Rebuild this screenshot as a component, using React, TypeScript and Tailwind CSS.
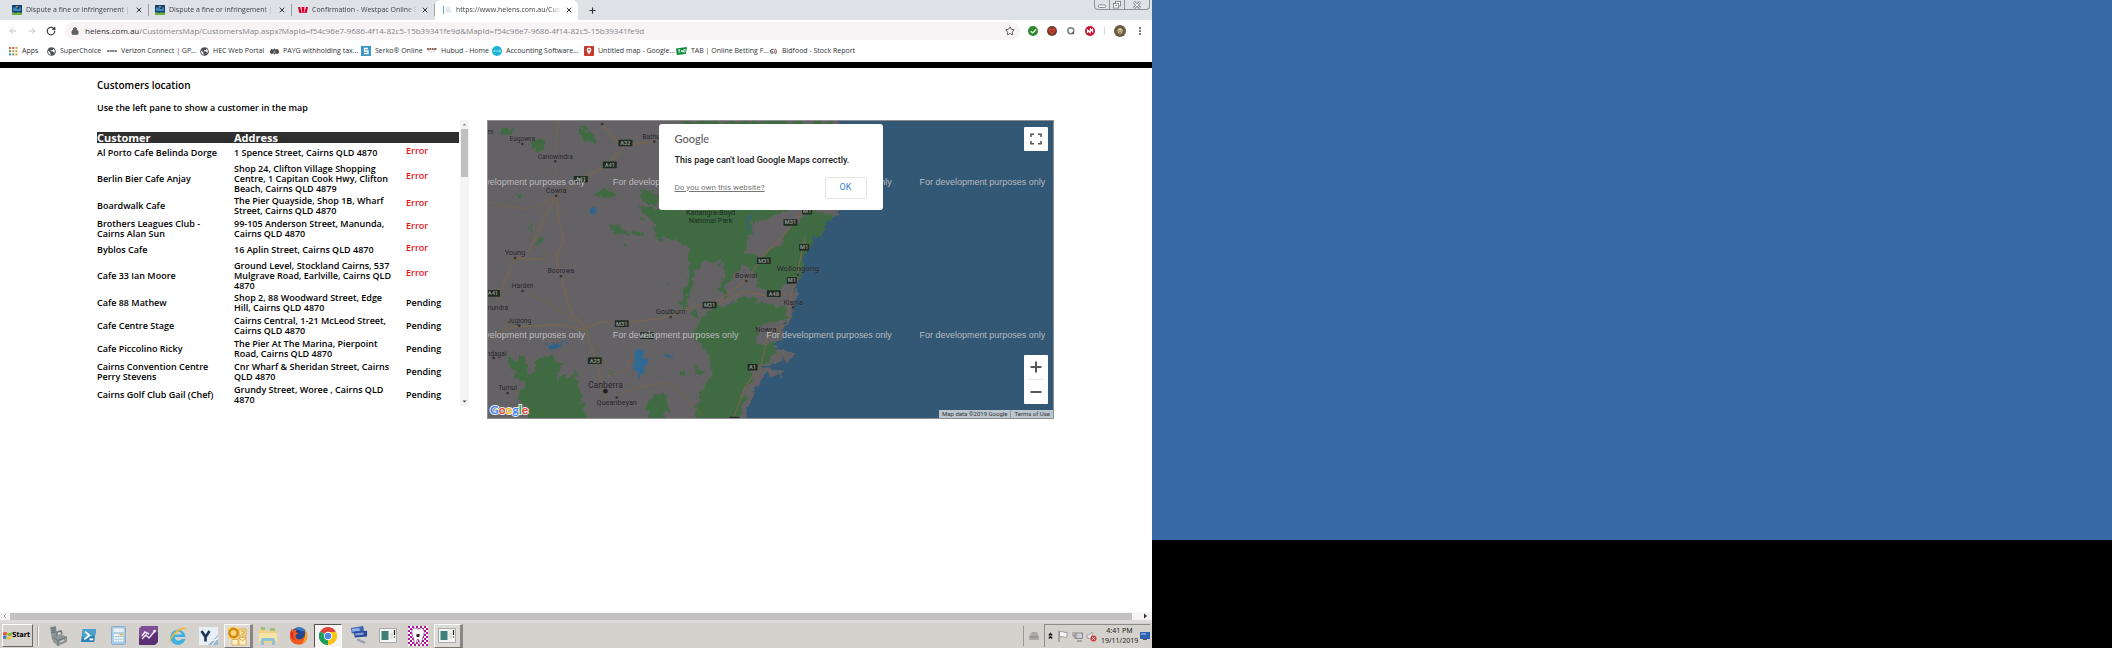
import type { ReactNode } from "react";
import {
  ArrowLeft,
  ArrowRight,
  RotateCw,
  Lock,
  Star,
  X,
  Plus,
  EllipsisVertical,
  Check,
} from "lucide-react";

const UI = "font-['Open_Sans','Noto_Sans',sans-serif]";

/* ---------- Favicons ---------- */

function CouncilIcon() {
  return (
    <svg viewBox="0 0 10 10" className="size-[10px]">
      <rect width="10" height="10" fill="#123f73" />
      <path d="M1 2l2 1 1-2 1 3h2l1-3 1 2v3H1z" fill="#3f83b8" />
      <path d="M0 7.5c2-1 3 1 5 0s3 1 5 0V10H0z" fill="#6fae3c" />
      <path d="M4 1l1 2 1-2z" fill="#f2c230" />
    </svg>
  );
}

function WestpacIcon() {
  return (
    <svg viewBox="0 0 10 10" className="size-[10px]">
      <path d="M0 2h2.200l1.400 6H2.200Q1.200 8 1 7zM3.400 2h3.200v6H3.400zM7.800 2H10L9 7q-.2 1-1.200 1H6.400z" fill="#d5002b" />
      <path d="M3 2l1 6M7 2L6 8" stroke="#fff" strokeWidth=".5" />
    </svg>
  );
}

function PageIcon() {
  return (
    <svg viewBox="0 0 10 10" className="size-[10px]">
      <path d="M1 1h1v8H1z" fill="#6ea0d8" />
      <path d="M4 3h4M4 5h5M4 7h5" stroke="#c4d2e2" strokeWidth="1" />
    </svg>
  );
}

function AppsIcon() {
  const fills = ["#d9604c", "#d9604c", "#e0a040", "#5c9a58", "#c98a3c", "#c9a03c", "#4a7cc0", "#5c9a58", "#c9a03c"];
  return (
    <svg viewBox="0 0 9 9" className="size-[9px]">
      {fills.map((f, i) => (
        <rect key={i} x={(i % 3) * 3.2} y={Math.floor(i / 3) * 3.2} width="2" height="2" fill={f} />
      ))}
    </svg>
  );
}

function GlobeIcon() {
  return (
    <svg viewBox="0 0 10 10" className="size-[9px]">
      <circle cx="5" cy="5" r="4.800" fill="#4d5156" />
      <path d="M1.300 4l2.400 2.200v1.600l1 1C2 8.600.8 6.500 1.300 4zM5 1.200l2.500.8-.8 1.200-2 .4L3.900 4.800h2.400L8 6.300 7.200 8c2-1.800 2-4.500.3-6z" fill="#fff" />
    </svg>
  );
}

function DashIcon() {
  return (
    <svg viewBox="0 0 10 10" className="size-[10px]">
      <path d="M0 5h10" stroke="#555" strokeWidth="1.600" strokeDasharray="2.200 .4" />
    </svg>
  );
}

function CrestIcon() {
  return (
    <svg viewBox="0 0 10 10" className="size-[9px]">
      <path d="M0 6c0-3 2-5 3.500-3L5 1.500 6.500 3C8 1 10 3 10 6L8 8 6.500 7 5 8.500 3.500 7 2 8z" fill="#4a4a4a" />
      <path d="M4 4h2v3H4z" fill="#999" />
    </svg>
  );
}

function SerkoIcon() {
  return (
    <svg viewBox="0 0 10 10" className="size-[10px]">
      <rect width="10" height="10" fill="#3b97c9" />
      <path d="M7 2.500H3.500V5H7v2.500H3" fill="none" stroke="#fff" strokeWidth="1.300" />
    </svg>
  );
}

function HubudIcon() {
  return (
    <svg viewBox="0 0 10 10" className="size-[10px]">
      <path d="M0 3h10" stroke="#8a5a50" strokeWidth="1.800" strokeDasharray="1.800 .6" />
      <path d="M1 5h2M4 6h1M6 5h2" stroke="#b5a09a" strokeWidth=".8" />
    </svg>
  );
}

function XeroIcon() {
  return (
    <svg viewBox="0 0 10 10" className="size-[10px]">
      <circle cx="5" cy="5" r="5" fill="#1ab4d7" />
      <path d="M1.800 4l1.500 2m0-2L1.800 6M4 5h1.500M6 6V4.500M7 4.200h1.300v1.500H7z" fill="none" stroke="#dff4fa" strokeWidth=".6" />
    </svg>
  );
}

function MyMapsIcon() {
  return (
    <svg viewBox="0 0 10 10" className="size-[10px]">
      <rect width="10" height="10" rx="1" fill="#c5392c" />
      <path d="M5 1.500a2.300 2.300 0 0 1 2.300 2.300C7.300 5.600 5 8.500 5 8.500S2.700 5.600 2.700 3.800A2.300 2.300 0 0 1 5 1.500z" fill="#fff" />
      <circle cx="5" cy="3.800" r=".9" fill="#c5392c" />
    </svg>
  );
}

function TabIcon() {
  return (
    <svg viewBox="0 0 11 10" className="h-[10px] w-[11px]">
      <path d="M0 2.500L11 1 9.800 8 .8 9z" fill="#0c8a3e" />
      <path d="M2 4l2.200-.3M3.200 4v2.800M5 6.500l1-2.500.8 2.300M7.800 3.500l1.500 0-.4 2.600H7.600z" stroke="#fff" strokeWidth=".8" fill="none" />
    </svg>
  );
}

function BidfoodIcon() {
  return (
    <svg viewBox="0 0 10 10" className="size-[9px]">
      <path d="M5 2.500C2 2.500 1 4 1.500 5.500S4 8 4.500 6.500 3 5 2.500 5.500M7 2c2 2 1 5 0 6" fill="none" stroke="#444" strokeWidth="1.100" />
      <path d="M6 3v4" stroke="#b03030" strokeWidth=".8" />
    </svg>
  );
}

/* ---------- Browser chrome ---------- */

function Tab({ icon, title, active = false }: { icon: ReactNode; title: string; active?: boolean }) {
  return (
    <div
      className={
        active
          ? "flex h-5 w-[143px] items-center gap-1 rounded-t-md bg-white pl-[7px] pr-[5px] [&>svg]:shrink-0"
          : "flex h-5 w-[143px] items-center gap-1 pl-[6px] pr-0 [&>svg]:shrink-0"
      }
    >
      {icon}
      <span className="min-w-0 flex-1 overflow-hidden whitespace-nowrap mask-r-from-90% text-[7px] text-[#3f4347]">
        {title}
      </span>
      <button type="button" aria-label="Close tab" className="text-[#303338]">
        <X className="size-[8px]" strokeWidth={3} />
      </button>
      {!active && <span className="ml-px h-3 w-px bg-[#9aa0a6]" />}
    </div>
  );
}

function WindowControls() {
  return (
    <div className="mr-[2px] flex h-[10px] w-14 self-start rounded-b-sm border border-t-0 border-[#8f9499] text-[#70757b]">
      <button type="button" aria-label="Minimise" className="flex flex-1 items-center justify-center border-r border-[#8f9499]">
        <svg viewBox="0 0 8 8" className="size-2"><rect x=".5" y="4" width="7" height="2.500" rx="1" fill="#fff" stroke="currentColor" strokeWidth=".8" /></svg>
      </button>
      <button type="button" aria-label="Restore" className="flex flex-1 items-center justify-center border-r border-[#8f9499]">
        <svg viewBox="0 0 8 8" className="size-2" fill="#fff" stroke="currentColor" strokeWidth=".8"><rect x="2.500" y=".5" width="5" height="4.500" /><rect x=".5" y="2.500" width="5" height="4.500" /><path d="M2 4.500h2" /></svg>
      </button>
      <button type="button" aria-label="Close" className="flex w-6 items-center justify-center">
        <svg viewBox="0 0 8 8" className="size-2" stroke="currentColor"><path d="M1 1l6 6M7 1L1 7" strokeWidth="2.600" /><path d="M1.300 1.300l5.400 5.400M6.700 1.300L1.300 6.700" stroke="#fff" strokeWidth="1.200" /></svg>
      </button>
    </div>
  );
}

function TabStrip() {
  return (
    <div className="flex h-5 items-end bg-[#dee1e6] pl-[6px]">
      <Tab icon={<CouncilIcon />} title="Dispute a fine or infringement | Bris" />
      <Tab icon={<CouncilIcon />} title="Dispute a fine or infringement | Bris" />
      <Tab icon={<WestpacIcon />} title="Confirmation - Westpac Online Ban" />
      <Tab icon={<PageIcon />} title="https://www.helens.com.au/Custo" active />
      <button type="button" aria-label="New tab" className="flex h-5 w-7 items-center justify-center text-[#303338]">
        <Plus className="size-[9px]" strokeWidth={3} />
      </button>
      <div className="flex-1" />
      <WindowControls />
    </div>
  );
}

function Toolbar() {
  return (
    <div className="flex h-[22px] items-center bg-white pr-[7px]">
      <div className="flex w-[65px] items-center gap-[9px] pl-2">
        <button type="button" aria-label="Back" className="text-[#b6b8bb]"><ArrowLeft className="size-[10px]" strokeWidth={2} /></button>
        <button type="button" aria-label="Forward" className="text-[#b6b8bb]"><ArrowRight className="size-[10px]" strokeWidth={2} /></button>
        <button type="button" aria-label="Reload" className="text-[#3c4043]"><RotateCw className="size-[10px]" strokeWidth={3} /></button>
      </div>
      <div className="flex h-[18px] flex-1 items-center rounded-full bg-[#f8f3f5] pl-[6px] pr-[5px]">
        <Lock className="size-[8px] fill-[#5f6368] text-[#5f6368]" strokeWidth={3} />
        <a href="#address" className="ml-[6px] flex-1 whitespace-nowrap text-[8px] leading-[18px] text-[#85878c]">
          <span className="text-[#2b2d30]">helens.com.au</span>
          /CustomersMap/CustomersMap.aspx?MapId=f54c96e7-9686-4f14-82c5-15b39341fe9d&amp;MapId=f54c96e7-9686-4f14-82c5-15b39341fe9d
        </a>
        <button type="button" aria-label="Bookmark this page" className="text-[#3c4043]"><Star className="size-[10px]" strokeWidth={2} /></button>
      </div>
      <div className="ml-2 flex items-center gap-[9px]">
        <button type="button" aria-label="Safe site" className="flex size-[10px] items-center justify-center rounded-full bg-[#2d8a2f] text-white"><Check className="size-[7px]" strokeWidth={4} /></button>
        <button type="button" aria-label="Brave extension" className="size-[10px]">
          <svg viewBox="0 0 10 10"><circle cx="5" cy="5" r="5" fill="#6b3a30" /><path d="M2 2.500h6L8.300 5 5 8.800 1.700 5z" fill="#d3452c" /><path d="M3.500 4.500l1.500 1 1.500-1" stroke="#6d2015" fill="none" /></svg>
        </button>
        <button type="button" aria-label="Search extension" className="size-[10px]">
          <svg viewBox="0 0 10 10"><circle cx="4.800" cy="4.800" r="3" fill="#fff" stroke="#77787a" strokeWidth="1.400" /><path d="M6.500 7.500l1.500-.8" stroke="#444" strokeWidth="1.500" /></svg>
        </button>
        <button type="button" aria-label="Norton extension" className="size-[10px]">
          <svg viewBox="0 0 10 10"><circle cx="5" cy="5" r="5" fill="#c8102e" /><path d="M2.500 7V4l2.500 2.500L5.500 3 7.500 5.500V2.500" fill="none" stroke="#fff" strokeWidth="1.300" /></svg>
        </button>
        <span className="h-2 w-px bg-[#d5d7da]" />
        <button type="button" aria-label="Profile" className="size-3">
          <svg viewBox="0 0 12 12"><circle cx="6" cy="6" r="6" fill="#6d5b43" /><path d="M3.500 5.500a2.600 3 0 0 1 5.200 0c0 2-1 3.500-2.600 3.500S3.500 7.500 3.500 5.500z" fill="#d8bf95" /><path d="M3.500 4.200C4 2 8 2 8.700 4.200M4.500 6h1M6.800 6h1M5 7.800h2" stroke="#4a3c2c" fill="none" strokeWidth=".8" /></svg>
        </button>
        <button type="button" aria-label="Menu" className="text-[#4b4f54]"><EllipsisVertical className="size-[10px]" strokeWidth={3} /></button>
      </div>
    </div>
  );
}

const bookmarks = [
  { icon: <AppsIcon />, label: "Apps", width: "w-[38px]" },
  { icon: <GlobeIcon />, label: "SuperChoice", width: "w-[60px]" },
  { icon: <DashIcon />, label: "Verizon Connect | GP…", width: "w-[93px]" },
  { icon: <GlobeIcon />, label: "HEC Web Portal", width: "w-[70px]" },
  { icon: <CrestIcon />, label: "PAYG withholding tax…", width: "w-[91px]" },
  { icon: <SerkoIcon />, label: "Serko® Online", width: "w-[66px]" },
  { icon: <HubudIcon />, label: "Hubud - Home", width: "w-[65px]" },
  { icon: <XeroIcon />, label: "Accounting Software…", width: "w-[92px]" },
  { icon: <MyMapsIcon />, label: "Untitled map - Google…", width: "w-[92px]" },
  { icon: <TabIcon />, label: "TAB | Online Betting F…", width: "w-[93px]" },
  { icon: <BidfoodIcon />, label: "Bidfood - Stock Report", width: "w-[93px]" },
];

function BookmarksBar() {
  return (
    <nav aria-label="Bookmarks" className="flex h-5 items-center bg-white pb-[2px] pl-[9px]">
      {bookmarks.map((b) => (
        <a key={b.label} href="#bookmark" className={`flex items-center gap-1 whitespace-nowrap text-[7px] text-[#2f3236] [&>svg]:shrink-0 ${b.width}`}>
          {b.icon}
          <span>{b.label}</span>
        </a>
      ))}
    </nav>
  );
}

/* ---------- Customers list ---------- */

const customers = [
  { name: "Al Porto Cafe Belinda Dorge", address: "1 Spence Street, Cairns QLD 4870", status: "Error" },
  { name: "Berlin Bier Cafe Anjay", address: "Shop 24, Clifton Village Shopping\nCentre, 1 Capitan Cook Hwy, Clifton\nBeach, Cairns QLD 4879", status: "Error" },
  { name: "Boardwalk Cafe", address: "The Pier Quayside, Shop 1B, Wharf\nStreet, Cairns QLD 4870", status: "Error" },
  { name: "Brothers Leagues Club -\nCairns Alan Sun", address: "99-105 Anderson Street, Manunda,\nCairns QLD 4870", status: "Error" },
  { name: "Byblos Cafe", address: "16 Aplin Street, Cairns QLD 4870", status: "Error" },
  { name: "Cafe 33 Ian Moore", address: "Ground Level, Stockland Cairns, 537\nMulgrave Road, Earlville, Cairns QLD\n4870", status: "Error" },
  { name: "Cafe 88 Mathew", address: "Shop 2, 88 Woodward Street, Edge\nHill, Cairns QLD 4870", status: "Pending" },
  { name: "Cafe Centre Stage", address: "Cairns Central, 1-21 McLeod Street,\nCairns QLD 4870", status: "Pending" },
  { name: "Cafe Piccolino Ricky", address: "The Pier At The Marina, Pierpoint\nRoad, Cairns QLD 4870", status: "Pending" },
  { name: "Cairns Convention Centre\nPerry Stevens", address: "Cnr Wharf & Sheridan Street, Cairns\nQLD 4870", status: "Pending" },
  { name: "Cairns Golf Club Gail (Chef)", address: "Grundy Street, Woree , Cairns QLD\n4870", status: "Pending" },
];

function rowHeight(address: string) {
  const lines = address.split("\n").length;
  if (lines === 1) return "h-5";
  return lines === 2 ? "h-[23px]" : "h-[31px]";
}

function CustomerTable() {
  return (
    <div className="flex w-[372px] shrink-0 justify-between self-start">
      <div className="w-[362px] pt-3">
        <table className="w-full table-fixed border-collapse text-left text-[9px] leading-[10px] font-semibold text-black">
          <thead>
            <tr className="h-[11px] bg-[#2e2e2e] text-[11px] leading-[11px] text-white">
              <th className="w-[137px] p-0 font-bold">Customer</th>
              <th className="w-[172px] p-0 font-bold">Address</th>
              <th className="p-0" aria-label="Status" />
            </tr>
          </thead>
          <tbody>
            {customers.map((c) => (
              <tr key={c.name} className={rowHeight(c.address)}>
                <td className="whitespace-pre p-0 align-middle">{c.name}</td>
                <td className="whitespace-pre p-0 align-middle">{c.address}</td>
                <td className={c.status === "Error" ? "p-0 pb-[5px] align-middle text-[#e0131c]" : "p-0 align-middle"}>
                  {c.status}
                </td>
              </tr>
            ))}
          </tbody>
        </table>
      </div>
      <div className="flex w-[9px] flex-col items-center bg-[#f6f3f5]">
        <svg viewBox="0 0 9 9" className="size-[9px]"><path d="M2.500 5.500L4.500 3.500l2 2z" fill="#8a8a8a" /></svg>
        <div className="h-12 w-[7px] bg-[#c1bfc0]" />
        <div className="flex-1" />
        <svg viewBox="0 0 9 9" className="size-[9px]"><path d="M2.500 3.500l2 2 2-2z" fill="#444" /></svg>
      </div>
    </div>
  );
}

/* ---------- Map ---------- */

const towns: [string, number, number, number][] = [
  ["Eugowra", 126, 92, 20],
  ["Canowindra", 225, 144, 20],
  ["Bathurst", 525, 84, 20],
  ["Cowra", 228, 246, 22],
  ["Young", 104, 433, 22],
  ["Boorowa", 242, 489, 20],
  ["Harden", 127, 533, 20],
  ["Jugiong", 117, 638, 20],
  ["Goulburn", 572, 611, 22],
  ["Bowral", 799, 503, 22],
  ["Canberra", 376, 832, 26],
  ["Queanbeyan", 410, 886, 22],
  ["Tumut", 82, 838, 20],
  ["Wollongong", 954, 481, 24],
  ["Kiama", 940, 583, 20],
  ["Nowra", 858, 664, 22],
];

const dots: [number, number][] = [
  [126, 100], [225, 152], [228, 256], [104, 443], [242, 497], [127, 542], [117, 646],
  [572, 620], [799, 512], [410, 862], [82, 849], [954, 493], [940, 591], [366, 40], [523, 93], [40, 743],
];

const shields: [string, number, number][] = [
  ["A32", 436, 97], ["A41", 389, 163], ["A41", 302, 206], ["A41", 38, 549], ["M31", 852, 451],
  ["M31", 689, 584], ["M31", 425, 640], ["M23", 501, 676], ["A25", 344, 751], ["A48", 882, 550],
  ["A1", 818, 771], ["M31", 932, 336], ["M1", 973, 411], ["M1", 936, 510], ["M1", 982, 302], ["A1", 764, 930],
];

const watermarkX = [-63, 398, 859, 1320];
const watermarkY = [222, 683];

function MapCanvas() {
  return (
    <svg viewBox="23 31 1698 897" preserveAspectRatio="xMinYMin slice" className="absolute inset-0 size-full" fontFamily="Roboto, sans-serif">
      <defs>
        <filter id="rough" x="-5%" y="-5%" width="110%" height="110%">
          <feTurbulence type="fractalNoise" baseFrequency="0.035" numOctaves="3" seed="7" />
          <feDisplacementMap in="SourceGraphic" scale="40" xChannelSelector="R" yChannelSelector="G" />
        </filter>
      </defs>
      <rect x="0" y="0" width="1760" height="960" fill="#656266" />
      <g fill="#3f6a43" filter="url(#rough)">
        <path d="M520 290H960L830 330 800 400 790 430 840 440 900 400 940 340 1000 300 1060 310 1050 370 1000 400 975 450 960 500 920 530 880 545 835 530 825 480 790 470 760 490 730 560 715 540 735 490 720 450 680 450 650 470 640 520 625 560 610 590 600 580 620 530 630 480 625 420 600 395 560 385 530 340 470 290z" />
        <path d="M700 590L760 575 810 562 850 580 920 590 935 615 900 635 840 650 825 690 850 705 900 700 870 740 830 770 800 830 790 880 770 940H635L660 850 695 790 690 730 640 680 650 640z" />
        <path d="M80 740L130 745 150 790 190 730 240 760 230 820 280 780 300 850 320 900 315 940H150L140 890 110 870 130 830z" />
        <path d="M505 860l50-10 10 30-15 60h-45l-5-40z" />
        <path d="M155 85l40 10-5 25-30 5zM305 50l35 15 10 30-40 5zM60 50l30 8 5 12-30-5z" />
        <path d="M340 245l70-10 10 20-60 10zM110 245l20 5-5 22-15-5zM165 380l20 8-15 20zM150 345l12 8-10 6zM395 345l30 0 15 25-40-2zM432 392l18 12-5 8z" />
        <path d="M470 240l60 10 20 30-50 0zM455 360l40 5-5 15-35-8zM515 340l60 0 0 45-40 0zM640 600l20 8-4 14-18-6zM590 480l16 4-6 10zM470 320l20 4-4 10z" />
        <path d="M385 780l15 15 0 8-15-10zM600 780l20 5-5 20-15-4zM640 770l30 5 0 15-20 0zM560 510l8 6-6 6zM100 790l20 10-8 14zM200 850l16 2-4 12z" />
        <path d="M600 31h470v14H600z" />
      </g>
      <g filter="url(#rough)">
        <path d="M1075 20H1760V960H790L805 890 820 840 850 797 905 795 918 780 880 785 858 772 866 752 890 758 912 742 930 758 938 732 890 712 908 680 912 640 938 610 948 570 942 540 958 515 965 480 972 450 988 415 1002 385 1042 360 1032 345 1068 320 1080 295z" fill="#305875" />
        <path d="M468 715l14 12 16 22-10 45-14 10-12-40z" fill="#2d6a93" />
        <path d="M325 290l18 0 4 12-8 14zM555 735l22 2-10 9zM205 700l30 10 28-20 4 6-40 22-20 2zM800 350l10-40 8 0-14 60z" fill="#2f648c" />
        <path d="M848 765l28-6 2 14-20 2z" fill="#305875" />
      </g>
      <g fill="none" stroke="#78664c" strokeWidth="3.600" strokeLinejoin="round">
        <path d="M366 40l42 50 28 14 90-12M436 104l-60 62-75 42-72 48-40 70-42 95-45 30-54 115M229 256l5 70 16 60-22 55 14 60 32 110 42 40 30 100 30 110" />
        <path d="M23 688l70-38 150-6 60 14 60-24 62 4 120-14 110-40 60-12 80-60 60-80 60-60 60-80" />
        <path d="M715 583l75-40 60 12 70-5M975 380l-20 100-20 70-10 90-60 30-20 90-50 70-40 110" />
        <path d="M23 275l120 22 86-40M104 443l80 4 30-20M127 542l80 40 70 45M376 800l60-20 28-60M410 852l60-20 90-15 50 40 60 60" strokeWidth="2.500" />
        <path d="M234 31l-10 120 5 105M376 750l20 50" strokeWidth="2" />
      </g>
      <g fill="#1f1f22">
        {dots.map(([x, y]) => (
          <circle key={`${x}-${y}`} cx={x} cy={y} r="4" fill="#343236" />
        ))}
        <circle cx="376" cy="843" r="7" />
      </g>
      {shields.map(([label, x, y]) => (
        <g key={`${label}-${x}-${y}`}>
          <rect x={x - (label.length > 2 ? 21 : 15)} y={y - 10} width={label.length > 2 ? 42 : 30} height="20" rx="2" fill="#1f2c22" />
          <text x={x} y={y + 6} textAnchor="middle" fontSize="17" fontWeight="700" fill="#8e918c">{label}</text>
        </g>
      ))}
      <g textAnchor="middle" fill="#232226" stroke="#77747a" strokeWidth="2" strokeOpacity=".4" paintOrder="stroke">
        {towns.map(([name, x, y, size]) => (
          <text key={name} x={x} y={y} fontSize={size}>{name}</text>
        ))}
        <g fill="#16301c" stroke="none" fontSize="22">
          <text x="692" y="315">Kanangra-Boyd</text>
          <text x="692" y="338">National Park</text>
        </g>
        <g textAnchor="start" fontSize="20">
          <text x="-22" y="70">Forbes</text>
          <text x="-38" y="598">Cootamundra</text>
          <text x="-6" y="736">Gundagai</text>
        </g>
      </g>
      <g fill="#b9bbbe" fontSize="27" fontFamily="'Liberation Sans', sans-serif">
        {watermarkY.map((y) =>
          watermarkX.map((x) => (
            <text key={`${x}-${y}`} x={x} y={y}>For development purposes only</text>
          )),
        )}
      </g>
    </svg>
  );
}

function GoogleWordmark() {
  return (
    <svg viewBox="0 0 42 16" className="absolute bottom-0 left-px h-4 w-[42px]" role="img" aria-label="Google">
      <text x="1" y="12" fontFamily="Lato, sans-serif" fontSize="12" fontWeight="700" stroke="#e6e6e6" strokeWidth="2" paintOrder="stroke">
        <tspan fill="#4285f4">G</tspan>
        <tspan fill="#ea4335">o</tspan>
        <tspan fill="#fbbc05">o</tspan>
        <tspan fill="#4285f4">g</tspan>
        <tspan fill="#34a853">l</tspan>
        <tspan fill="#ea4335">e</tspan>
      </text>
    </svg>
  );
}

function MapPane() {
  return (
    <section aria-label="Map" className="relative h-[299px] flex-1 overflow-hidden border border-[#8f8d90] font-['Roboto',sans-serif]">
      <MapCanvas />
      <GoogleWordmark />
      <div role="dialog" aria-label="Google" className="absolute inset-x-0 top-[3px] mx-auto h-[86px] w-56 rounded-[3px] bg-white px-4 pt-[7px]">
        <p className="font-['Lato',sans-serif] text-[11px] leading-4 font-medium text-[#5f5f5f]">Google</p>
        <p className="mt-[5px] whitespace-nowrap text-[9px] leading-4 font-medium text-[#212121]">This page can't load Google Maps correctly.</p>
        <div className="mt-[9px] flex items-center justify-between">
          <a href="#owner" className="text-[8px] text-[#757575] underline">Do you own this website?</a>
          <button type="button" className="h-[22px] w-[42px] rounded-[2px] border border-[#e4e4e4] text-[9px] text-[#3b82d0]">OK</button>
        </div>
      </div>
      <button type="button" aria-label="Toggle fullscreen" className="absolute right-[5px] top-[6px] flex size-6 items-center justify-center rounded-[1px] bg-white">
        <svg viewBox="0 0 12 12" className="size-3" fill="none" stroke="#555" strokeWidth="1.600"><path d="M1 4V1.300h3M8 1.300h3V4M11 8v2.700H8M4 10.700H1V8" /></svg>
      </button>
      <div className="absolute bottom-[14px] right-[5px] flex w-6 flex-col items-center rounded-[1px] bg-white">
        <button type="button" aria-label="Zoom in" className="flex h-6 w-full items-center justify-center">
          <svg viewBox="0 0 12 12" className="size-3" stroke="#555" strokeWidth="2"><path d="M6 .5v11M.5 6h11" /></svg>
        </button>
        <span className="h-px w-4 bg-[#e6e6e6]" />
        <button type="button" aria-label="Zoom out" className="flex h-6 w-full items-center justify-center">
          <svg viewBox="0 0 12 12" className="size-3" stroke="#555" strokeWidth="2"><path d="M.5 6h11" /></svg>
        </button>
      </div>
      <div className="absolute bottom-0 right-0 flex h-2 items-center divide-x divide-[#8a96a0] bg-[#bcc6cf] text-[6px] leading-[8px] text-[#333]">
        <span className="px-[3px]">Map data ©2019 Google</span>
        <a href="#terms" className="px-[3px]">Terms of Use</a>
      </div>
    </section>
  );
}

/* ---------- Taskbar ---------- */

function ConsoleIcon() {
  return (
    <svg viewBox="0 0 18 15" className="h-[15px] w-[18px]">
      <rect x=".5" y=".5" width="17" height="14" fill="#f4f4f2" stroke="#a9abad" />
      <rect x="2.500" y="3" width="7" height="9" fill="#3f7f79" />
      <path d="M11 5h3v6h-3z" fill="#e3e3e3" />
      <path d="M15.500 2v5M15.500 8.500v1" stroke="#222" strokeWidth="1.200" />
    </svg>
  );
}

const taskIcons: { name: string; raised?: boolean; pressed?: boolean; art: ReactNode }[] = [
  {
    name: "Server Manager",
    art: (
      <svg viewBox="0 0 20 20" className="size-5">
        <path d="M2 1l6-1 1 13-5 1z" fill="#8d9496" /><path d="M3.500 2.500l4-.6M3.500 4.500l4-.6M3.700 6.500l4-.6" stroke="#5e676a" />
        <path d="M5 11l8-3 6 3v5l-9 4-5-4z" fill="#8f9799" /><path d="M5 11l5 3.500 9-3.500M10 14.500V20" stroke="#687174" fill="none" /><path d="M9 10V6l4-1 1 3" stroke="#6b7476" strokeWidth="1.500" fill="none" /><path d="M12 16l4-2" stroke="#dfe3e4" />
      </svg>
    ),
  },
  {
    name: "PowerShell",
    art: (
      <svg viewBox="0 0 18 18" className="size-[17px]">
        <path d="M3 2h14l-2 14H1z" fill="#2b83b8" /><path d="M3 2h14l-1 7-14 2z" fill="#4ba0cc" />
        <path d="M5.500 5l4.500 4-5.500 4M10 13h4" stroke="#fff" strokeWidth="1.800" fill="none" />
      </svg>
    ),
  },
  {
    name: "Calculator",
    art: (
      <svg viewBox="0 0 16 20" className="h-[19px] w-[15px]">
        <rect x=".5" y=".5" width="15" height="19" rx="1" fill="#a9cbe6" stroke="#87aac8" /><rect x="2.500" y="2.500" width="11" height="4" fill="#e6f1f8" />
        <path d="M3 9.500h10M3 12.500h10M3 15.500h10" stroke="#fff" strokeWidth="2" strokeDasharray="2 .7" /><path d="M9 9h4" stroke="#e6b95c" strokeWidth="2" />
      </svg>
    ),
  },
  {
    name: "Performance",
    art: (
      <svg viewBox="0 0 19 19" className="size-[19px]">
        <path d="M3 0h16v16l-3 3H0V3z" fill="#5b2f74" /><path d="M3 0h16v6L0 12V3z" fill="#7d4f95" />
        <path d="M3 13l4-4 3 3 6-7M3 10l3-4 4 2" stroke="#f0e5f5" strokeWidth="1.500" fill="none" /><circle cx="15.500" cy="5" r="1.300" fill="#fff" />
      </svg>
    ),
  },
  {
    name: "Internet Explorer",
    art: (
      <svg viewBox="0 0 20 20" className="size-5">
        <path d="M17.500 11H6.500a4 4 0 0 0 7.300 2h3.500A7.600 7.600 0 1 1 17.500 11zM6.500 8.500h7.300a3.800 3.800 0 0 0-7.300 0z" fill="#3fb0e0" fillRule="evenodd" />
        <path d="M2 17.500C-1 14 6 5 13 2c4-1.500 6-.5 5 3-.3-2.500-2.500-2.300-5-1C7 7 1 14 2 17.500z" fill="#f0b93a" />
      </svg>
    ),
  },
  {
    name: "Yammer",
    art: (
      <svg viewBox="0 0 19 18" className="h-[18px] w-[19px]">
        <rect width="19" height="18" fill="#e9eff6" /><path d="M9 18L19 8v10z" fill="#9db8d6" /><path d="M11 14l8-2M13 18l6-8" stroke="#fff" />
        <path d="M2.500 4L6.500 10V14.500M10.500 4L6.500 10" stroke="#1d3557" strokeWidth="2.600" fill="none" />
      </svg>
    ),
  },
  {
    name: "Outlook",
    raised: true,
    art: (
      <svg viewBox="0 0 20 20" className="size-5">
        <rect x="1" y="1" width="11" height="12" fill="#f8d77c" /><path d="M12 3h7v7h-7z" fill="#fbe6a8" stroke="#d99a2b" strokeWidth=".8" />
        <circle cx="6.500" cy="7" r="4.200" fill="none" stroke="#d5860f" strokeWidth="2.400" />
        <path d="M5 13.500h6V19H5zM12 11.500h7V19h-7z" fill="#fff2c8" stroke="#e0a83c" strokeWidth=".8" /><path d="M12 12l3.500 3 3.500-3M14 5h3v3h-3" stroke="#d99a2b" fill="none" />
      </svg>
    ),
  },
  {
    name: "File Explorer",
    art: (
      <svg viewBox="0 0 20 20" className="size-5">
        <path d="M1 3h6l1 2h11v12H1z" fill="#ecd386" /><path d="M3 1h4v3H3zM12 2h5v3h-5z" fill="#9fc27a" /><path d="M1 7h18v8H1z" fill="#f5e4a6" />
        <path d="M3 19v-5q0-2 2-2h10q2 0 2 2v5h-3v-4H6v4z" fill="#8fc3dc" />
      </svg>
    ),
  },
  {
    name: "Firefox",
    art: (
      <svg viewBox="0 0 20 20" className="size-[19px]">
        <circle cx="10.500" cy="9" r="7.800" fill="#23478f" /><path d="M6 3c4-3 10-1 11.500 3l-5-1z" fill="#3a7cc4" />
        <path d="M2 5C-.5 10 .5 19 10 19.500c7 0 10-6 9-11-.5-2-1.500-3-2-4 .5 5-1 9-5.500 9.500-3 .2-5-1.500-4.500-4 .5-1.500 2-1.500 3-1.500-.5-1.500-2-2-3-2L8 3.500C6 3.500 5 4.500 4.500 5L3 2.500z" fill="#ee5a1f" />
        <path d="M17 4.500c3.500 5 2 12-4 14 3-2.500 4.500-7 4-14z" fill="#f8b21c" /><path d="M2 5c-1 5 1 9 5 11-3-4-3-7-2-9z" fill="#d62a2a" />
      </svg>
    ),
  },
  {
    name: "Chrome",
    pressed: true,
    art: (
      <svg viewBox="0 0 20 20" className="size-[18px]">
        <path d="M10 10L1.340 5A10 10 0 0 1 18.660 5z" fill="#dc4437" /><path d="M10 10L18.660 5A10 10 0 0 1 10 20z" fill="#fbc516" /><path d="M10 10v10A10 10 0 0 1 1.340 5z" fill="#1f9d57" />
        <path d="M10 5.500h8.900A10 10 0 0 1 19 14l-5 2z" fill="#fbc516" /><path d="M1.340 5L6 13l4 1.500L8 19.800A10 10 0 0 1 1.340 5z" fill="#1f9d57" />
        <circle cx="10" cy="10" r="4.600" fill="#fff" /><circle cx="10" cy="10" r="3.600" fill="#4a89e8" />
      </svg>
    ),
  },
  {
    name: "Remote Desktop",
    art: (
      <svg viewBox="0 0 20 20" className="size-[19px]">
        <path d="M2 2l13-2 1 6-13 2z" fill="#3f66b8" /><path d="M3 3l8-1 .5 3-8 1z" fill="#8fb0e4" /><path d="M5 6l14-1v6L6 12z" fill="#2b4a9b" /><path d="M6.500 7.500l9-.7-.3 2.500-8.200.8z" fill="#7f9bd8" /><path d="M9 13l9 4-2 2-8-4z" fill="#9aa0ad" />
      </svg>
    ),
  },
  { name: "Console", art: <ConsoleIcon /> },
  {
    name: "Dental",
    art: (
      <svg viewBox="0 0 20 20" className="size-5">
        <defs>
          <pattern id="check" width="4" height="4" patternUnits="userSpaceOnUse"><rect width="4" height="4" fill="#fff" /><rect width="2" height="2" fill="#b0129c" /><rect x="2" y="2" width="2" height="2" fill="#b0129c" /></pattern>
        </defs>
        <rect width="20" height="20" fill="url(#check)" />
        <path d="M5 3c2-2 3.500 0 5 0s3-2 5 0 1 6 0 8-1 7-2.500 7-1-5-2.500-5-1 5-2.500 5S6 13 5 11 3 5 5 3z" fill="#fff" stroke="#77407a" strokeWidth=".7" />
        <path d="M8.500 8h3v3h-3z" fill="#222" />
      </svg>
    ),
  },
  { name: "Console window", raised: true, art: <ConsoleIcon /> },
];

function Taskbar() {
  return (
    <footer className="flex h-[25px] items-center bg-[#d5d2cd]">
      <button type="button" className="ml-[2px] flex h-[23px] w-[31px] items-center border border-b-[#6b6966] border-l-white border-r-[#6b6966] border-t-white font-['DejaVu_Sans_Condensed','DejaVu_Sans',sans-serif] text-[7px] font-bold text-black">
        <svg viewBox="0 0 10 10" className="size-[9px] shrink-0">
          <path d="M0 2q2-1.500 4.500-.3L4 5Q2 3.800 0 5z" fill="#e2572c" /><path d="M5.200 2Q7 3 10 1.500L9.500 5Q7 6 4.800 5z" fill="#7cb83a" /><path d="M0 5.800Q2 4.500 4 5.700L3.500 9Q2 8-.3 9z" fill="#3e7cd0" /><path d="M4.700 6Q7 7 9.300 5.800L8.800 9Q6.500 10.200 4.200 9z" fill="#f2c12e" />
        </svg>
        Start
      </button>
      <span className="ml-[4px] h-5 w-[2px] border-l border-[#aaa7a2] bg-white" />
      <div className="ml-1 flex h-full items-center">
        {taskIcons.map((t) => (
          <div key={t.name} className="flex h-full w-[30px] items-center justify-center">
            <button
              type="button"
              aria-label={t.name}
              className={
                t.pressed
                  ? "flex h-6 w-7 items-center justify-center border border-b-white border-l-[#55534f] border-r-white border-t-[#55534f] bg-[#f6f5f4]"
                  : t.raised
                    ? "flex h-6 w-[29px] items-center justify-center border border-b-[#77746f] border-l-white border-r-[3px] border-r-[#8a8782] border-t-white bg-[#dedbd6]"
                    : "flex h-6 w-7 items-center justify-center"
              }
            >
              {t.art}
            </button>
          </div>
        ))}
      </div>
      <div className="flex-1" />
      <span className="h-5 w-px bg-[#9b9893]" />
      <svg viewBox="0 0 12 10" className="mx-[4px] h-[10px] w-3"><path d="M2 4l2-3h5l1 3 1 1v4H1V5z" fill="#aaa9a6" /><path d="M2 6h8" stroke="#888" /></svg>
      <div className="mr-[2px] flex h-[23px] items-center border-l border-t border-[#8f8c87] pl-[3px]">
        <button type="button" aria-label="Show hidden icons" className="mr-1">
          <svg viewBox="0 0 5 8" className="h-2 w-[5px]" fill="none" stroke="#111" strokeWidth="1.200"><path d="M.8 3.500L2.500 1.500l1.700 2M.8 6.500l1.700-2 1.700 2" /></svg>
        </button>
        <svg viewBox="0 0 11 11" className="mr-1 size-[11px]"><path d="M2 0v11" stroke="#777" /><path d="M2.500 1q2-1 4 0t3.500 0v5q-2 1-3.500 0t-4 0z" fill="#f5f5f5" stroke="#888" strokeWidth=".8" /></svg>
        <svg viewBox="0 0 11 11" className="mr-[3px] size-[11px]"><path d="M1 1v4M3 1v4M1 5h2v3" stroke="#888" fill="none" /><rect x="4" y="2" width="6.500" height="5.500" fill="#c9cdd2" stroke="#7b7b7b" strokeWidth=".8" /><path d="M5 10h5" stroke="#777" /></svg>
        <svg viewBox="0 0 11 11" className="mr-1 size-[11px]"><path d="M1 4h2l3-3v8L3 7H1z" fill="#f1f1f1" stroke="#888" strokeWidth=".7" /><circle cx="7.500" cy="7.500" r="3" fill="#cf3a3a" /><path d="M6.300 6.300l2.400 2.400M8.700 6.300L6.300 8.700" stroke="#fff" strokeWidth=".9" /></svg>
        <div className="w-[37px] text-center font-['Noto_Sans','Open_Sans',sans-serif] text-[7px] leading-[10px] text-[#222]">
          <div>4:41 PM</div>
          <div>19/11/2019</div>
        </div>
        <svg viewBox="0 0 10 8" className="ml-[2px] h-2 w-[10px]"><rect width="10" height="7" fill="#2f5fb0" /><path d="M1 1h5v2H1z" fill="#6f9be0" /><path d="M3 7.500h4" stroke="#555" /></svg>
      </div>
    </footer>
  );
}

function BrowserWindow() {
  return (
    <div className={`flex min-w-0 flex-col bg-white ${UI}`}>
      <TabStrip />
      <Toolbar />
      <BookmarksBar />
      <div className="h-[6px] bg-black" />
      <main className="flex-1 pl-[97px] pr-[98px] pt-[6px]">
        <h1 className="text-[10px] leading-[22px] font-semibold text-black">Customers location</h1>
        <p className="text-[9px] leading-[24px] font-semibold text-black">Use the left pane to show a customer in the map</p>
        <div className="flex gap-[18px]">
          <CustomerTable />
          <MapPane />
        </div>
      </main>
      <div className="flex h-[11px] items-center border-b-[3px] border-[#dcdada] bg-[#f6f4f5] pr-1">
        <svg viewBox="0 0 10 8" className="h-2 w-[10px]"><path d="M6 2L4 4l2 2" fill="none" stroke="#999" /></svg>
        <div className="mr-3 h-[7px] flex-1 bg-[#c3c1c2]" />
        <svg viewBox="0 0 4 8" className="h-2 w-1"><path d="M0 1.500L3 4 0 6.500z" fill="#333" /></svg>
      </div>
      <Taskbar />
    </div>
  );
}

export default function App() {
  return (
    <div className="grid min-h-screen grid-cols-[6fr_5fr]">
      <BrowserWindow />
      <div className="flex flex-col">
        <div className="flex-[5] bg-[#3969a5]" />
        <div className="flex-1 bg-black" />
      </div>
    </div>
  );
}
